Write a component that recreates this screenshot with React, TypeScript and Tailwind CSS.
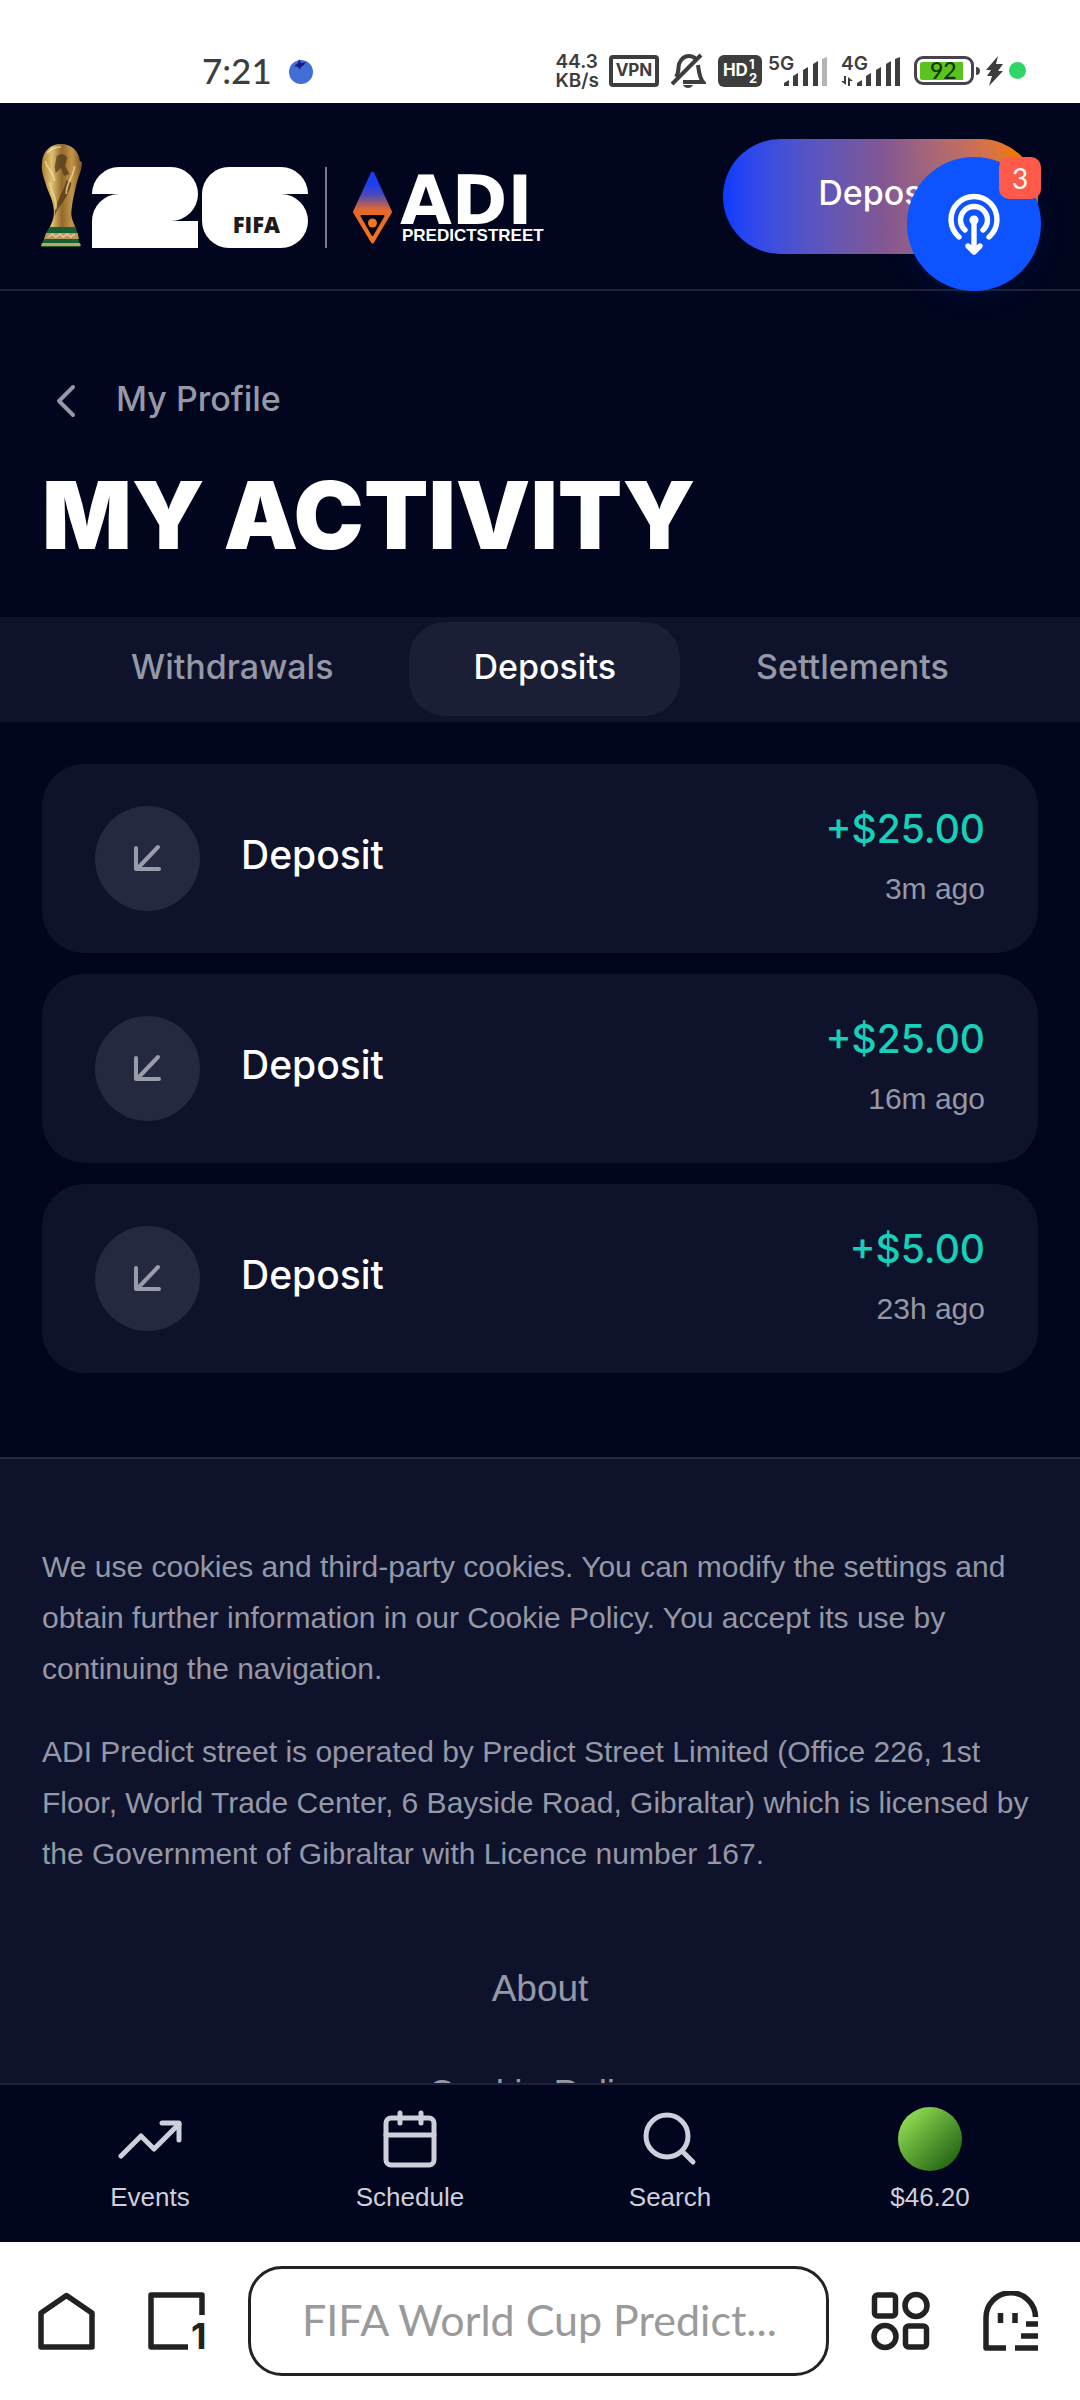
import type { ReactNode } from "react";

const transactions = [
  { id: 1, label: "Deposit", amount: "+$25.00", time: "3m ago" },
  { id: 2, label: "Deposit", amount: "+$25.00", time: "16m ago" },
  { id: 3, label: "Deposit", amount: "+$5.00", time: "23h ago" },
];

const tabs = ["Withdrawals", "Deposits", "Settlements"];

function SignalBars({ label, lastColor, arrows }: { label: string; lastColor: string; arrows?: boolean }) {
  return (
    <svg className="overflow-visible" width="61" height="36" viewBox="0 0 61 36" fill="#3d3d3d" aria-label={label}>
      <text x="0" y="17" fontFamily="Inter" fontWeight="600" fontSize="19">{label}</text>
      <path d="M16 33v-3l5-3v6z" />
      <path d="M25 33V23l5-3v13z" />
      <path d="M35 33V17l5-3v19z" />
      <path d="M45 33V11l5-3v25z" />
      <path d="M54 33V6l5-2v29z" fill={lastColor} />
      {arrows && <path d="M0 28h3v-5h2v9zM12 28H9v5H7v-9z" />}
    </svg>
  );
}

function StatusBar() {
  return (
    <div className="flex shrink-0 items-center bg-white pt-[38px] pr-[54px] pl-[202px] text-[#3d3d3d]">
      <div className="flex h-[65px] flex-1 items-center gap-4 font-[Lato] text-[35px] font-medium">
        <span>7:21</span>
        <svg width="26" height="26" viewBox="0 0 26 26" aria-hidden="true">
          <circle cx="13" cy="14" r="12" fill="#416fd6" />
          <path d="M11 1l2 4 5-1-3 4-2 1-1 3-2-3-4-1 4-3z" fill="#1d1a86" />
        </svg>
      </div>
      <div className="flex items-center">
        <div className="mr-2.5 font-[Inter] text-[19px] leading-[19px] font-semibold">
          <p>44.3</p>
          <p>KB/s</p>
        </div>
        <div className="mr-3 flex h-8 w-[50px] items-center justify-center rounded-[4px] border-4 border-current font-[Inter] text-[17px] font-bold">
          VPN
        </div>
        <svg className="mr-3" width="35" height="36" viewBox="0 0 35 36" fill="none" stroke="currentColor" strokeWidth="4" aria-hidden="true">
          <path d="M5 24c3-4 2-8 3-13C10 6 13 3 18 3c3 0 5 1 7 3" />
          <path d="M27 12c1 6 1 12 5 17H12" />
          <path d="M1 31 30 2" />
          <path d="M12 32c2 4 8 4 10 0z" fill="currentColor" stroke="none" />
        </svg>
        <div className="mr-1.5 flex h-8 w-[44px] items-center justify-center gap-px rounded-[6px] bg-[#3d3d3d] font-[Inter] text-white">
          <span className="text-[17px] font-bold">HD</span>
          <span className="flex flex-col text-[13px] leading-[14px] font-bold">
            <span>1</span>
            <span>2</span>
          </span>
        </div>
        <div className="mr-3">
          <SignalBars label="5G" lastColor="#b4b4b4" />
        </div>
        <div className="mr-3">
          <SignalBars label="4G" lastColor="#3d3d3d" arrows />
        </div>
        <div className="flex h-[29px] w-[60px] items-center justify-center rounded-[9px] border-[3px] border-[#46434d] p-[3px]">
          <span className="flex h-[18px] w-full items-center rounded-[2px] bg-linear-to-r from-[#59c41d] from-90% to-white to-90% pl-2.5 font-[Lato] text-[23px] font-medium text-[#17330a]">
            92
          </span>
        </div>
        <span className="ml-0.5 h-2 w-1 rounded-r-sm bg-[#46434d]" />
        <svg className="mx-1.5" width="17" height="30" viewBox="0 0 17 30" fill="currentColor" aria-hidden="true">
          <path d="M12 0 0 14h5l-4 6h5L3 30 17 15h-5l5-7h-7z" />
        </svg>
        <span className="size-[17px] rounded-full bg-[#30d567]" />
      </div>
    </div>
  );
}

function Trophy() {
  return (
    <svg width="41" height="103" viewBox="0 0 39 103" preserveAspectRatio="none" aria-hidden="true">
      <defs>
        <linearGradient id="gold" x1="0" x2="1" y1="0" y2="0">
          <stop offset="0" stopColor="#a97f34" />
          <stop offset="0.25" stopColor="#e0c074" />
          <stop offset="0.5" stopColor="#94692b" />
          <stop offset="0.75" stopColor="#c0964a" />
          <stop offset="1" stopColor="#7c541d" />
        </linearGradient>
      </defs>
      <path d="M19 0c10 0 17 7 18 17l2 1c0 8-3 13-5 21-2 9-4 17-5 27-1 8 2 12 4 18H8c3-7 5-11 4-20C11 54 6 47 4 38 2 31 0 26 1 18 2 7 9 0 19 0z" fill="url(#gold)" />
      <path d="M15 12c4-3 9-2 10 2l-2 8 4 8-5 2-3-8-5 5-1-6z" fill="#51391a" opacity="0.75" />
      <path d="M24 36c-2 12-11 22-11 36 4-11 13-18 16-33z" fill="#4c3414" opacity="0.7" />
      <path d="M8 38c1 10 8 16 6 27M32 22c-1 11-8 16-8 28" fill="none" stroke="#f0d891" strokeWidth="1.6" opacity="0.8" />
      <path d="M6 9c4-5 8-6 13-6M4 17c2 9 8 10 9 20" fill="none" stroke="#f7e4a9" strokeWidth="1.5" opacity="0.7" />
      <path d="M8 83h25l2 8 2 12H0l4-12z" fill="#165f33" />
      <path d="M5 89h30l1 6H3z" fill="#b99a5e" />
      <path d="M7 93l4-3 3 3 4-3 3 3 4-3 3 3 4-3" stroke="#e8c7a0" strokeWidth="1.4" fill="none" />
      <path d="M1 99h36l1 3H0z" fill="#bda663" />
    </svg>
  );
}

function Logo() {
  return (
    <a href="#home" aria-label="FIFA 26 ADI Predictstreet" className="flex items-center text-white">
      <Trophy />
      <div className="relative mt-6 ml-2.5 flex gap-1">
        <div className="flex w-[106px] flex-col">
          <span className="h-[27px] rounded-t-[27px] bg-white" />
          <span className="h-[27px] rounded-tl-[27px] rounded-br-[27px] bg-white" />
          <span className="h-[27px] bg-white" />
        </div>
        <div className="flex w-[106px] flex-col">
          <span className="h-[27px] rounded-t-[27px] bg-white" />
          <span className="h-[27px] rounded-tr-[27px] bg-white" />
          <span className="h-[27px] rounded-b-[27px] bg-white" />
        </div>
        <span className="absolute right-7 bottom-3 font-[Open_Sans] text-[22px] leading-6 font-extrabold text-[#1b1b1b]">
          FIFA
        </span>
      </div>
      <span className="mt-6 mr-6 ml-[17px] h-[81px] w-0.5 bg-[#777a89]" />
      <svg className="mt-6" width="43" height="74" viewBox="0 0 42 74" aria-hidden="true">
        <defs>
          <linearGradient id="gem" x1="0" x2="0" y1="0" y2="1">
            <stop offset="0.15" stopColor="#1a3ff5" />
            <stop offset="0.32" stopColor="#4a49b8" />
            <stop offset="0.53" stopColor="#e3682c" />
            <stop offset="1" stopColor="#f5761c" />
          </linearGradient>
        </defs>
        <path d="M21 2 39 41 21 71 3 41z" fill="url(#gem)" stroke="url(#gem)" strokeWidth="3" strokeLinejoin="round" />
        <path d="M10 45h22L21 64z" fill="#01051d" stroke="#01051d" strokeWidth="2" strokeLinejoin="round" />
        <circle cx="21" cy="52" r="4.5" fill="#f5761c" />
      </svg>
      <div className="mt-[30px] ml-1.5 flex flex-col">
        <span className="font-[DejaVu_Sans] text-[67px] leading-[50px] font-bold">ADI</span>
        <span className="pl-0.5 font-[Liberation_Sans] text-[17px] leading-5 font-bold">PREDICTSTREET</span>
      </div>
    </a>
  );
}

function Header() {
  return (
    <header className="flex shrink-0 items-start justify-between border-b-2 border-[#1d2138] pt-[36px] pr-[42px] pl-[41px]">
      <div className="mt-1">
        <Logo />
      </div>
      <div className="relative mb-[35px]">
        <button className="h-[115px] w-[315px] rounded-full bg-linear-to-r from-[#0a3bff] via-[#805694] via-50% to-[#f07800] to-92% pb-2 font-[Inter] text-[34px] font-medium text-white">
          Deposit
        </button>
        <button
          aria-label="Connections, 3 new"
          className="absolute top-[18px] -right-[3px] flex size-[134px] items-center justify-center rounded-full bg-[#0d53ff] shadow-[0_4px_30px_rgba(13,83,255,0.12)]"
        >
          <svg width="60" height="64" viewBox="0 0 60 64" fill="none" stroke="#fff" strokeWidth="5.4" strokeLinecap="round" strokeLinejoin="round" aria-hidden="true">
            <path d="M15 45A23 23 0 1 1 45 45" />
            <path d="M21 38A13.500 13.500 0 1 1 39 38" />
            <circle cx="30" cy="28" r="4.600" fill="#fff" stroke="none" />
            <path d="M30 28v31M24 54l6 6 6-6" />
          </svg>
          <span className="absolute top-0 right-0 flex size-[42px] items-center justify-center rounded-[10px] bg-[#ff5a49] font-[Lato] text-[28px] text-white">
            3
          </span>
        </button>
      </div>
    </header>
  );
}

function ActivityRow({ label, amount, time }: { label: string; amount: string; time: string }) {
  return (
    <li className="flex h-[189px] items-center rounded-[42px] bg-[#0e132b] px-[53px]">
      <span className="flex size-[105px] items-center justify-center rounded-full bg-[#25293f]">
        <svg width="32" height="32" viewBox="0 0 32 32" fill="none" stroke="#9a9caa" strokeWidth="4" strokeLinecap="round" strokeLinejoin="round" aria-hidden="true">
          <path d="M26 4 5 26M4 5v21h23" />
        </svg>
      </span>
      <span className="mb-1.5 ml-[41px] flex-1 font-[Inter] text-[39px] font-medium text-white">{label}</span>
      <span className="flex flex-col items-end">
        <span className="font-[Inter] text-[39px] leading-[60px] font-medium text-[#17d0b9]">{amount}</span>
        <span className="text-[30px] leading-[60px] text-[#9598a6]">{time}</span>
      </span>
    </li>
  );
}

function NavItem({ label, children }: { label: string; children: ReactNode }) {
  return (
    <a href={"#" + label} className="flex flex-1 flex-col items-center gap-1.5 text-[26px] leading-10 text-[#cdcfda]">
      <svg width="64" height="64" viewBox="0 0 64 64" fill="none" stroke="currentColor" strokeWidth="5" strokeLinecap="round" strokeLinejoin="round" aria-hidden="true">
        {children}
      </svg>
      {label}
    </a>
  );
}

function BottomNav() {
  return (
    <nav className="flex shrink-0 border-t-2 border-[#1d2138] bg-[#01051d] px-5 pt-[22px] pb-[25px]">
      <NavItem label="Events">
        <path d="M3 49 23 29 36 42 61 17" />
        <path d="M44 16h17v17" />
      </NavItem>
      <NavItem label="Schedule">
        <rect x="8" y="11" width="48" height="47" rx="5" />
        <path d="M22 6v10M43 6v10M8 28h48" />
      </NavItem>
      <NavItem label="Search">
        <circle cx="29" cy="29" r="21" />
        <path d="M45 45 55 55" />
      </NavItem>
      <a href="#balance" className="flex flex-1 flex-col items-center gap-1.5 text-[26px] leading-10 text-[#cdcfda]">
        <span className="size-16 rounded-full bg-linear-to-br from-[#8cd850] from-15% to-[#1e6312] to-90%" />
        $46.20
      </a>
    </nav>
  );
}

function BrowserBar() {
  return (
    <div className="flex shrink-0 items-center gap-[42px] bg-white pt-6 pr-[41px] pb-6 pl-[38px] text-[#222]">
      <div className="flex gap-[53px]">
        <button aria-label="Home">
          <svg width="57" height="58" viewBox="0 0 57 58" fill="none" stroke="currentColor" strokeWidth="5.5" strokeLinejoin="round">
            <path d="M3 21 28.500 3.500 54 21v34H3z" />
          </svg>
        </button>
        <button aria-label="Tabs, 1 open">
          <svg className="overflow-visible" width="58" height="58" viewBox="0 0 58 58" fill="none" stroke="currentColor" strokeWidth="5.5" strokeLinejoin="round">
            <path d="M54 23V3H3v52h37" />
            <text x="43" y="57" fontFamily="Inter" fontWeight="700" fontSize="36" fill="currentColor" stroke="none">1</text>
          </svg>
        </button>
      </div>
      <input
        aria-label="Address"
        placeholder="FIFA World Cup Predict..."
        className="h-[110px] min-w-0 flex-1 rounded-[34px] border-[3px] border-[#222] px-[51px] pb-1 font-[Lato] text-[43px] placeholder:text-[#9a9a9a]"
      />
      <div className="flex gap-[53px]">
        <button aria-label="Apps">
          <svg width="59" height="60" viewBox="0 0 59 60" fill="none" stroke="currentColor" strokeWidth="5.5">
            <rect x="3.500" y="4" width="21" height="21" rx="3" />
            <circle cx="45" cy="14.500" r="11" />
            <circle cx="14" cy="45.500" r="11" />
            <rect x="34.500" y="35" width="21" height="21" rx="3" />
          </svg>
        </button>
        <button aria-label="Private mode">
          <svg width="56" height="60" viewBox="0 0 56 60" fill="none" stroke="currentColor" strokeWidth="5.5" strokeLinejoin="round">
            <path d="M52.500 26A24.500 24.500 0 0 0 3 27v30h20" />
            <path d="M17.500 22v10M32 22v10M43 33h12M38 45h17M32 57h23" />
          </svg>
        </button>
      </div>
    </div>
  );
}

export default function App() {
  return (
    <div className="flex h-screen flex-col overflow-hidden bg-[#01051d] font-[Liberation_Sans,Arial,sans-serif]">
      <StatusBar />
      <Header />
      <main className="flex min-h-0 flex-1 flex-col overflow-y-auto [scrollbar-width:none]">
        <a href="#profile" className="mt-[74px] flex items-center gap-10 px-[42px] font-[Inter] text-[34px] leading-[68px] font-medium text-[#9598a6]">
          <svg className="mt-1 ml-3 shrink-0" width="22" height="34" viewBox="0 0 22 34" fill="none" stroke="currentColor" strokeWidth="4" strokeLinecap="round" strokeLinejoin="round" aria-hidden="true">
            <path d="M19 3 5 17l14 14" />
          </svg>
          My Profile
        </a>
        <h1 className="mt-7 px-[42px] font-[Inter] text-[94px] leading-[108px] font-black whitespace-nowrap text-white">
          MY ACTIVITY
        </h1>
        <div role="tablist" className="mt-12 flex shrink-0 items-center justify-center gap-3 bg-[#0e132b] pt-[5px] pb-1.5">
          {tabs.map((tab) => (
            <button
              key={tab}
              role="tab"
              aria-selected={tab === "Deposits"}
              className="h-[94px] rounded-[36px] px-16 pb-1.5 font-[Inter] text-[34px] font-medium text-[#9598a6] aria-selected:bg-[#1b1f35] aria-selected:text-white"
            >
              {tab}
            </button>
          ))}
        </div>
        <ul className="mx-[42px] mt-[42px] flex flex-col gap-[21px]">
          {transactions.map((t) => (
            <ActivityRow key={t.id} label={t.label} amount={t.amount} time={t.time} />
          ))}
        </ul>
        <footer className="mt-[84px] shrink-0 border-t-2 border-[#25293f] bg-[#0e132b] px-[42px] pt-[82px] pb-20 text-[30px] leading-[51px] text-[#9598a6]">
          <p>
            We use cookies and third-party cookies. You can modify the settings and obtain further information in our
            Cookie Policy. You accept its use by continuing the navigation.
          </p>
          <p className="mt-8">
            ADI Predict street is operated by Predict Street Limited (Office 226, 1st Floor, World Trade Center, 6
            Bayside Road, Gibraltar) which is licensed by the Government of Gibraltar with Licence number 167.
          </p>
          <div className="mt-[84px] flex flex-col items-center gap-[53px] text-[37px] leading-[52px]">
            <a href="#about">About</a>
            <a href="#cookies">Cookie Policy</a>
          </div>
        </footer>
      </main>
      <BottomNav />
      <BrowserBar />
    </div>
  );
}
